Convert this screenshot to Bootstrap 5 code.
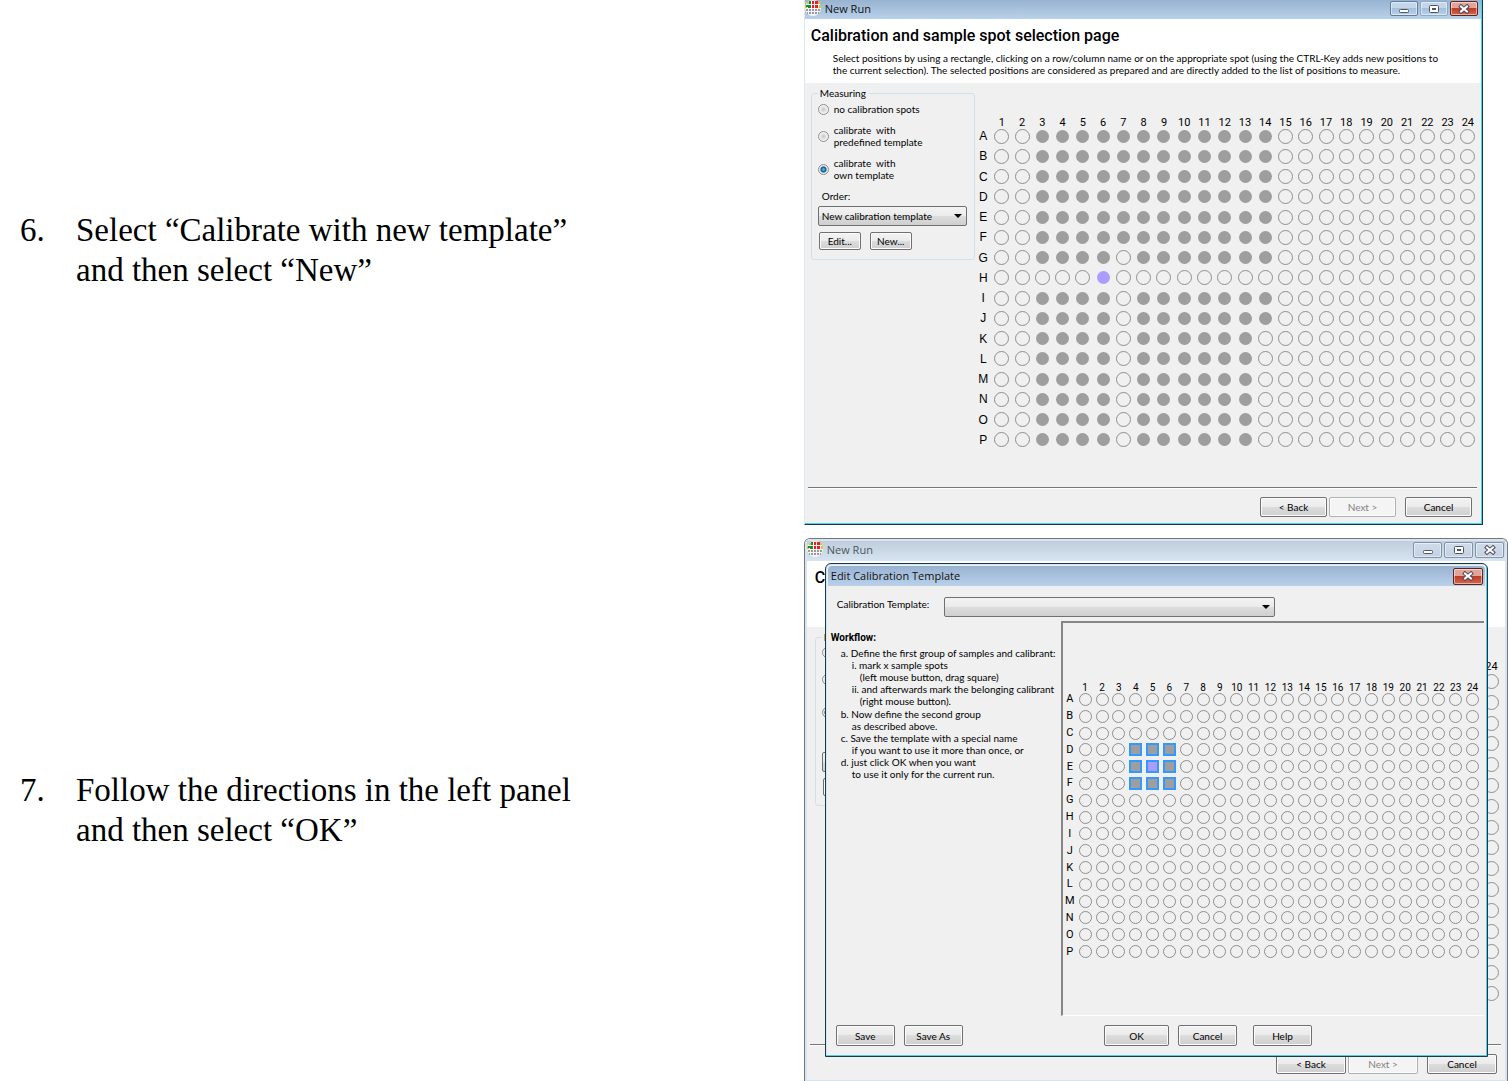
<!DOCTYPE html>
<html lang="en">
<head>
<meta charset="utf-8">
<meta name="viewport" content="width=device-width, initial-scale=1">
<title>Calibration steps</title>
<link href="https://cdn.jsdelivr.net/npm/bootstrap@5.3.0/dist/css/bootstrap.min.css" rel="stylesheet">
<style>
  body { background: #fff; color: #000; overflow: hidden; font: 10px/12px Lato, "Liberation Sans", sans-serif; }
  .step-copy { flex: 1 1 0; font: 33px/40px "Liberation Serif", serif; padding-left: 20px; }
  .step-num { flex: 0 0 56px; }
  .step-shot { flex: 0 0 46.7%; min-width: 0; }
  .step-one { padding-bottom: 13px; }
  .step-one .step-copy { padding-bottom: 25px; }
  .step-one .step-shot { padding-right: 25px; }

  .win { background: #f0f0f0; }
  .win-main { height: 525px; border-left: 1px solid #dfe9f3; border-right: 1px solid #0b3b4c; border-bottom: 1px solid #0b3b4c; box-shadow: inset -1px -1px #4fd0ea; padding: 0 1px 1px 0; }
  .win-back { height: 543px; border: 1px solid #777; border-bottom: 0; border-radius: 6px 6px 0 0; }
  .win-back > .win-inner { border: 2px solid #d7e4f2; border-bottom-width: 1px; border-radius: 5px 5px 0 0; }
  .titlebar { font: 11px/18px "Open Sans", sans-serif; color: #111; background: linear-gradient(#98b3d1, #b9d1ea); height: 19px; padding: 0 3px 0 0; }
  .win-back .titlebar { background: linear-gradient(#bfcddc, #d7e4f1); color: #4c5660; height: 20px; padding-right: 1px; }
  .win-icon { width: 16px; height: 16px; margin-right: 4px; }
  .cap-group { gap: 2px; }
  .capbtn { width: 28px; height: 15px; padding: 0; border: 1px solid #5f7c9b; border-radius: 2px; background: linear-gradient(#c4d6ea 45%, #a5bfdb 50%, #b8d0e8); display: flex; align-items: center; justify-content: center; box-shadow: inset 0 0 0 1px #ffffff80; }
  .capbtn-off { border-color: #8ea9c6; }
  .win-main .cap-group { padding-top: 1px; }
  .win-back .capbtn { border-color: #8492a5; background: linear-gradient(#d0dceb, #c3d1e3); }
  .win-back .cap-group .capbtn { width: 29px; height: 16px; margin-top: 1px; }
  .capbtn.capbtn-close { border-color: #5c2522; background: linear-gradient(#e3a498 45%, #bd3c25 50%, #d4664c); }
  .dlg-tpl .capbtn { width: 30px; height: 17px; }

  .page-head { background: #fff; height: 64px; padding: 8px 0 0 6px; }
  .page-title { font: 500 16px/18px Roboto, sans-serif; margin: 0 0 7px; }
  .page-note { margin: 0 0 0 22px; white-space: nowrap; }
  .win-back .page-head { height: 66px; padding-left: 8px; }

  .group { flex: 0 0 164px; margin-left: 6px; }
  .group-box { border: 1px solid #d3e0e8; border-radius: 3px; padding: 4px 7px 9px 6px; }
  .group-legend { float: none; width: auto; font-size: 10px; line-height: 12px; margin: 0; padding: 0 2px; background: #f0f0f0; }
  .opt { display: flex; align-items: center; gap: 5px; margin-bottom: 9px; }
  .opt-radio { appearance: none; flex: none; width: 11px; height: 11px; border: 1px solid #8e8f8f; border-radius: 50%; margin: 0; background: radial-gradient(#c8c8c8, #f6f6f6 70%); }
  .opt-radio:checked { background: radial-gradient(#4fb8e8 0 10%, #0b4d7c 40%, #dfe9ef 55%); }
  .pick { appearance: none; color: #000; border: 1px solid #707070; border-radius: 2px; height: 20px; padding: 0 16px 0 3px; line-height: 16px;
    background: url("data:image/svg+xml,%3Csvg xmlns='http://www.w3.org/2000/svg' viewBox='0 0 8 4'%3E%3Cpath d='M0 0h8L4 4z'/%3E%3C/svg%3E") no-repeat right 4px center / 8px 4px, linear-gradient(#f3f3f3, #ebebeb 50%, #dddddd 50%, #cfcfcf); }
  .cmd { --bs-btn-font-size: 10px; --bs-btn-line-height: 12px; --bs-btn-padding-x: 0; --bs-btn-padding-y: 0; --bs-btn-border-radius: 2px; --bs-btn-color: #000; --bs-btn-border-color: #707070; --bs-btn-disabled-color: #838383; --bs-btn-disabled-border-color: #adb2b5; --bs-btn-disabled-opacity: 1;
    width: 42px; height: 18px; background: linear-gradient(#f3f3f3, #ebebeb 50%, #dddddd 50%, #cfcfcf); box-shadow: inset 0 0 0 1px #fcfcfc; }
  .cmd:disabled { background: #f4f4f4; }
  .cmd-row { gap: 9px; margin-top: 6px; padding-left: 1px; }
  .cmd-nav { width: 67px; height: 20px; }
  .win-back .cmd-nav { width: 70px; }
  .cmd-last { margin-left: 7px; }
  .cmd-dlg { width: 59px; height: 21px; }
  .cmd-ok { width: 65px; }

  /* lower window: only its left rim shows beside the dialog */
  .rim { margin-left: 8px; }
  .rim .opt { margin-bottom: 16px; }
  .rim .opt + .opt { margin-bottom: 22px; }
  .rim .opt + .opt + .opt { margin-bottom: 34px; }

  .plate { display: grid; grid-template-columns: 17px repeat(24, 1fr); grid-template-rows: 7px repeat(16, 1fr); place-items: center; height: 331px; font: 11px/12px Roboto, sans-serif; }
  .plate-wrap { padding: 32px 3px 0 0; }
  .plate-row { font: 12px/12px "Liberation Sans", sans-serif; }
  .well { width: 15px; height: 15px; border: 1px solid #8f8f8f; border-radius: 50%; }
  .well-on { width: 13px; height: 13px; border: 0; background: #9e9e9e; }
  .well-cal { background: #ab9dff; }
  .plate-tpl { grid-template-columns: 14px repeat(24, 1fr); grid-template-rows: 6px repeat(16, 1fr); height: 275px; font-size: 10px; }
  .plate-tpl .plate-row { font: 11px/12px Roboto, sans-serif; }
  .plate-tpl .well { width: 13px; height: 13px; }
  .plate-tpl .well-on { border: 2px solid #3399ff; border-radius: 0; }
  .plate-edge { grid-template-columns: 21px; grid-template-rows: 8px repeat(16, 1fr); height: 341px; }
  .foot { border-top: 1px solid #777; box-shadow: inset 0 1px #fff; margin: 0 4px 0 3px; padding: 9px 5px 6px 0; gap: 2px; }
  .win-back .foot { padding-right: 4px; }

  .dlg-tpl { position: absolute; inset: 24px 19px 24px 20px; border: 1px solid #123d49; border-radius: 6px 6px 0 0; box-shadow: inset -1px -1px #55cbe5, inset 1px 1px #d5e6f2; padding: 2px; }
  .dlg-tpl .titlebar { background: linear-gradient(#98b3d1, #b9d1ea); color: #111; height: 20px; padding: 0 2px 0 3px; border-radius: 4px 4px 0 0; }
  .win-back .dlg-tpl .capbtn-close { border-color: #5c2522; background: linear-gradient(#e3a498 45%, #bd3c25 50%, #d4664c); }
  .dlg-top { padding: 11px 0 4px 9px; }
  .dlg-label { width: 107px; line-height: 14px; }
  .dlg-pick { width: 331px; }
  .dlg-foot { padding: 9px 173px 8px 8px; gap: 9px; }
  .cmd-help { margin-left: 7px; }
  .flow-pane { flex: 0 0 233px; padding: 11px 0 0 3px; }
  .flow-head { font: 700 10px/12px Roboto, sans-serif; display: block; }
  .flow-list { margin: 3px 0 0 10px; padding: 0; list-style: none; white-space: nowrap; }
  .flow-list .flow-list { margin: 0 0 1px 11px; }
  .flow-more { display: block; margin-left: 11px; }
  .flow-list .flow-list .flow-more { margin-left: 8px; }
  .plate-pane { border-left: 2px solid #868686; border-top: 2px solid #868686; border-bottom: 1px solid #fff; padding: 62px 3px 0 0; margin-right: 1px; }
</style>
</head>
<body>
<svg class="d-none">
  <symbol id="app" viewBox="0 0 16 16">
    <circle cx="8" cy="8" r="8" fill="#f4f4f4"/>
    <path d="M2 2h2v2H2zM0 5h2v3H0z" fill="#e5c12e"/><path d="M4 1h2v3H4zM3 5h3v3H3zM1 5h2v2H1z" fill="#168b36"/>
    <path d="M7 1h2v3H7zM10 1h3v3h-3zM7 5h2v3H7zM10 5h3v3h-3z" fill="#ec2024"/><path d="M13 2h2v2h-2zM14 5h2v3h-2z" fill="#e5c12e"/>
    <path d="M1 9h2v2H1zM4 9h2v2H4zM7 9h2v2H7zM10 9h2v2h-2zM13 9h2v2h-2zM2 12h1v2H2zM4 12h2v2H4zM7 12h2v2H7zM10 12h2v2h-2zM13 12h1v2h-1z" fill="#9a9a9a"/>
  </symbol>
  <symbol id="cap-min" viewBox="0 0 12 10"><rect x="1.5" y="5.5" width="9" height="3" rx="1" fill="#fff" stroke="#4d5566"/></symbol>
  <symbol id="cap-max" viewBox="0 0 12 10"><rect x="1.5" y="1.5" width="9" height="7" rx="1" fill="#fff" stroke="#4d5566"/><rect x="4.5" y="4.5" width="3" height="1" fill="#fff" stroke="#4d5566"/></symbol>
  <symbol id="cap-x" viewBox="0 0 12 10"><path d="M3 2.500l6 5M9 2.500l-6 5" stroke="#4d4a5a" stroke-width="4" stroke-linecap="square"/><path d="M3 2.500l6 5M9 2.500l-6 5" stroke="#fff" stroke-width="2" stroke-linecap="square"/></symbol>
</svg>

<main>
  <section class="step-one d-flex">
    <div class="step-copy d-flex flex-column justify-content-center"><div class="d-flex"><div class="step-num">6.</div><div>Select “Calibrate with new template”<br>and then select “New”</div></div></div>
    <div class="step-shot">
      <div class="win win-main d-flex flex-column">
        <div class="titlebar d-flex"><svg class="win-icon"><use href="#app"/></svg><span class="me-auto">New Run</span>
          <div class="cap-group d-flex">
            <button class="capbtn" aria-label="Minimize"><svg width="12" height="10"><use href="#cap-min"/></svg></button>
            <button class="capbtn capbtn-off" aria-label="Maximize"><svg width="12" height="10"><use href="#cap-max"/></svg></button>
            <button class="capbtn capbtn-close" aria-label="Close"><svg width="12" height="10"><use href="#cap-x"/></svg></button>
          </div>
        </div>
        <header class="page-head">
          <h1 class="page-title">Calibration and sample spot selection page</h1>
          <p class="page-note">Select positions by using a rectangle, clicking on a row/column name or on the appropriate spot (using the CTRL-Key adds new positions to<br>the current selection). The selected positions are considered as prepared and are directly added to the list of positions to measure.</p>
        </header>
        <div class="d-flex flex-grow-1 pt-1">
          <form class="group">
            <fieldset class="group-box">
              <legend class="group-legend">Measuring</legend>
              <label class="opt"><input class="opt-radio" type="radio" name="cal">no calibration spots</label>
              <label class="opt"><input class="opt-radio" type="radio" name="cal"><span>calibrate &nbsp;with<br>predefined template</span></label>
              <label class="opt"><input class="opt-radio" type="radio" name="cal" checked><span>calibrate &nbsp;with<br>own template</span></label>
              <label class="d-block px-1 mb-1" for="order">Order:</label>
              <select class="pick w-100 d-block" id="order"><option>New calibration template</option></select>
              <div class="cmd-row d-flex"><button type="button" class="btn cmd">Edit...</button><button type="button" class="btn cmd">New...</button></div>
            </fieldset>
          </form>
          <div class="plate-wrap flex-grow-1"><div class="plate" data-plate="main"></div></div>
        </div>
        <footer class="foot d-flex justify-content-end">
          <button class="btn cmd cmd-nav">&lt; Back</button><button class="btn cmd cmd-nav" disabled>Next &gt;</button><button class="btn cmd cmd-nav cmd-last">Cancel</button>
        </footer>
      </div>
    </div>
  </section>

  <section class="d-flex">
    <div class="step-copy d-flex flex-column justify-content-center"><div class="d-flex"><div class="step-num">7.</div><div>Follow the directions in the left panel<br>and then select “OK”</div></div></div>
    <div class="step-shot">
      <div class="win win-back position-relative">
        <div class="win-inner h-100 d-flex flex-column">
          <div class="titlebar d-flex"><svg class="win-icon"><use href="#app"/></svg><span class="me-auto">New Run</span>
            <div class="cap-group d-flex">
              <button class="capbtn" aria-label="Minimize"><svg width="12" height="10"><use href="#cap-min"/></svg></button>
              <button class="capbtn" aria-label="Maximize"><svg width="12" height="10"><use href="#cap-max"/></svg></button>
              <button class="capbtn" aria-label="Close"><svg width="12" height="10"><use href="#cap-x"/></svg></button>
            </div>
          </div>
          <header class="page-head"><h1 class="page-title">C</h1></header>
          <div class="d-flex flex-grow-1 pt-1 justify-content-between">
            <div class="group rim"><fieldset class="group-box"><legend class="group-legend">M</legend>
              <label class="opt"><input class="opt-radio" type="radio" name="cal2" aria-label="no calibration spots"></label>
              <label class="opt"><input class="opt-radio" type="radio" name="cal2" aria-label="predefined template"></label>
              <label class="opt"><input class="opt-radio" type="radio" name="cal2" aria-label="own template" checked></label>
              <select class="pick w-100 d-block" aria-label="Order"><option></option></select>
              <div class="cmd-row d-flex"><button type="button" class="btn cmd" aria-label="Edit"></button></div>
            </fieldset></div>
            <div class="plate-wrap"><div class="plate plate-edge" data-plate="edge"></div></div>
          </div>
          <footer class="foot d-flex justify-content-end">
            <button class="btn cmd cmd-nav">&lt; Back</button><button class="btn cmd cmd-nav" disabled>Next &gt;</button><button class="btn cmd cmd-nav cmd-last">Cancel</button>
          </footer>
        </div>

        <div class="win dlg-tpl d-flex flex-column" role="dialog" aria-label="Edit Calibration Template">
          <div class="titlebar d-flex align-items-center"><span class="me-auto">Edit Calibration Template</span>
            <button class="capbtn capbtn-close" aria-label="Close"><svg width="12" height="10"><use href="#cap-x"/></svg></button></div>
          <div class="dlg-top d-flex"><label class="dlg-label" for="tpl">Calibration Template:</label><select class="pick dlg-pick" id="tpl"><option></option></select></div>
          <div class="d-flex flex-grow-1">
            <div class="flow-pane">
              <strong class="flow-head">Workflow:</strong>
              <ul class="flow-list">
                <li>a. Define the first group of samples and calibrant:
                  <ul class="flow-list">
                    <li>i. mark x sample spots<span class="flow-more">(left mouse button, drag square)</span></li>
                    <li>ii. and afterwards mark the belonging calibrant<span class="flow-more">(right mouse button).</span></li>
                  </ul></li>
                <li>b. Now define the second group<span class="flow-more">as described above.</span></li>
                <li>c. Save the template with a special name<span class="flow-more">if you want to use it more than once, or</span></li>
                <li>d. just click OK when you want<span class="flow-more">to use it only for the current run.</span></li>
              </ul>
            </div>
            <div class="plate-pane flex-grow-1"><div class="plate plate-tpl" data-plate="tpl"></div></div>
          </div>
          <footer class="dlg-foot d-flex">
            <button class="btn cmd cmd-dlg">Save</button><button class="btn cmd cmd-dlg">Save As</button>
            <button class="btn cmd cmd-dlg cmd-ok ms-auto">OK</button><button class="btn cmd cmd-dlg">Cancel</button><button class="btn cmd cmd-dlg cmd-help">Help</button>
          </footer>
        </div>
      </div>
    </div>
  </section>
</main>

<script src="https://cdn.jsdelivr.net/npm/bootstrap@5.3.0/dist/js/bootstrap.bundle.min.js"></script>
<script>
  const rows = 'ABCDEFGHIJKLMNOP';
  // Each rule says whether a well is a sample ("on"), the calibrant ("cal") or empty.
  const rules = {
    main(r, c) {
      if (r === 7) return c === 6 ? 'cal' : '';
      if (c < 3 || c > (r < 10 ? 14 : 13)) return '';
      return c === 7 && r > 5 ? '' : 'on';
    },
    tpl(r, c) {
      if (r < 3 || r > 5 || c < 4 || c > 6) return '';
      return r === 4 && c === 5 ? 'cal' : 'on';
    },
    edge() { return ''; }
  };
  document.querySelectorAll('[data-plate]').forEach(plate => {
    const kind = plate.dataset.plate, edge = kind === 'edge', first = edge ? 24 : 1;
    let html = edge ? '' : '<span></span>';
    for (let c = first; c <= 24; c++) html += `<span>${c}</span>`;
    [...rows].forEach((name, r) => {
      if (!edge) html += `<span class="plate-row">${name}</span>`;
      for (let c = first; c <= 24; c++) {
        const s = rules[kind](r, c);
        html += `<i class="well${s ? ' well-on' : ''}${s === 'cal' ? ' well-cal' : ''}"></i>`;
      }
    });
    plate.innerHTML = html;
  });
</script>
</body>
</html>
